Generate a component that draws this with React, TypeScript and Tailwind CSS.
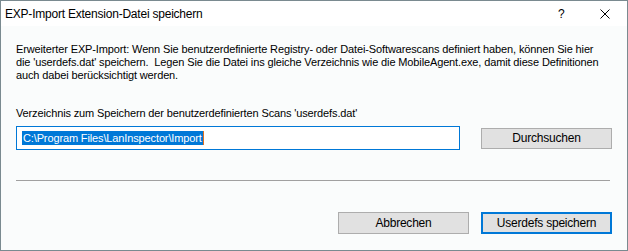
export default function App() {
  return (
    <div className="w-[628px] h-[251px] border border-[#7a8a90] flex flex-col bg-[#fafcfc] text-black font-['Liberation_Sans',Arial,sans-serif]">
      {/* Titelleiste */}
      <div className="h-[25px] bg-white flex items-center pl-[4px] text-[12px] tracking-[-0.22px]">
        <span className="flex-1 pt-[1px]">EXP-Import Extension-Datei speichern</span>
        <span className="w-[6px] text-center mr-[36px] pt-[1px]">?</span>
        <svg width="10" height="10" viewBox="0 0 10 10" className="mr-[17px]">
          <path d="M0.5 0.5 L9.5 9.5 M9.5 0.5 L0.5 9.5" stroke="#000" strokeWidth="1" />
        </svg>
      </div>

      {/* Inhalt */}
      <div className="flex-1 pl-[15px] pt-[17px] text-[11px] leading-[13px] tracking-[-0.13px]">
        <p className="whitespace-pre">
          {"Erweiterter EXP-Import: Wenn Sie benutzerdefinierte Registry- oder Datei-Softwarescans definiert haben, können Sie hier"}
          <br />
          {"die 'userdefs.dat' speichern.  Legen Sie die Datei ins gleiche Verzeichnis wie die MobileAgent.exe, damit diese Definitionen"}
          <br />
          {"auch dabei berücksichtigt werden."}
        </p>

        <p className="mt-[25px]">Verzeichnis zum Speichern der benutzerdefinierten Scans 'userdefs.dat'</p>

        <div className="flex items-start gap-[21px] mt-[6px]">
          <div className="w-[444px] h-[24px] border border-[#0078d7] bg-white flex items-center pl-[5px]">
            <span className="bg-[#0078d7] text-white h-[14px] leading-[14px] px-[1px]">C:\Program Files\LanInspector\Import</span>
            <span className="w-[1px] h-[14px] bg-[#e07020]" />
          </div>
          <button className="w-[131px] h-[21px] mt-[2px] border border-[#adadad] bg-[#e1e1e1] text-[12px] leading-[19px] tracking-[-0.22px]">
            Durchsuchen
          </button>
        </div>

        <div className="w-[594px] h-[1px] bg-[#a0a0a0] mt-[30px]" />

        <div className="flex justify-end gap-[12px] mt-[31px] pr-[15px]">
          <button className="w-[131px] h-[22px] border border-[#adadad] bg-[#e1e1e1] text-[12px] leading-[20px] tracking-[-0.22px]">
            Abbrechen
          </button>
          <button className="w-[131px] h-[22px] border-2 border-[#0078d7] bg-[#e1e1e1] text-[12px] leading-[18px] tracking-[-0.22px]">
            Userdefs speichern
          </button>
        </div>
      </div>
    </div>
  );
}
